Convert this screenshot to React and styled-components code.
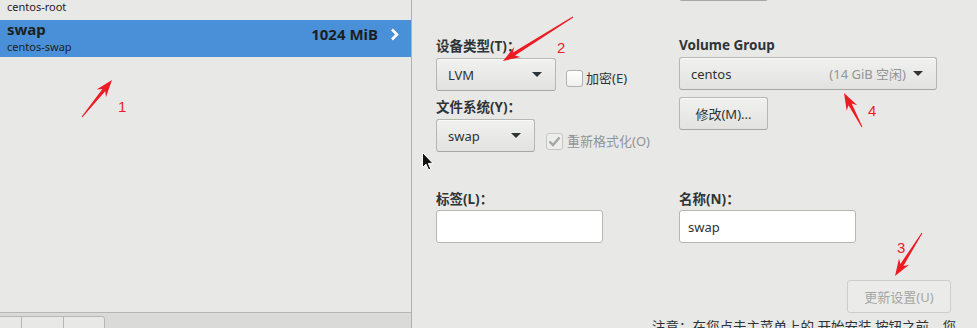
import React from 'react';
import styled, { createGlobalStyle } from 'styled-components';

const GlobalStyle = createGlobalStyle`
  html, body {
    margin: 0;
    padding: 0;
    overflow: hidden;
    background: #e8e8e7;
  }
  body {
    font-family: "Noto Sans", "Noto Sans CJK SC", sans-serif;
    color: #2e3436;
  }
  * {
    box-sizing: border-box;
  }
`;

const Screen = styled.div`
  position: relative;
  display: flex;
  width: 977px;
  height: 328px;
  overflow: hidden;
  background: #e8e8e7;
`;

/* ---------- left: partition list ---------- */

const LeftPane = styled.div`
  flex: none;
  width: 412px;
  display: flex;
  flex-direction: column;
  border-right: 1px solid #b1b1ae;
`;

const ListViewport = styled.div`
  flex: 1;
  overflow: hidden;
`;

const PartitionList = styled.div`
  display: flex;
  flex-direction: column;
  gap: 3px;
  margin-top: -20px;
`;

const PartitionRow = styled.div`
  height: 37px;
  display: flex;
  justify-content: space-between;
  padding: 0 12px 0 7px;
  background: ${(p) => (p.$selected ? '#4a90d9' : 'transparent')};
  color: #1c1f20;
`;

const RowText = styled.div`
  display: flex;
  flex-direction: column;
`;

const RowName = styled.div`
  font-size: 15px;
  font-weight: 700;
  line-height: 18px;
`;

const RowSub = styled.div`
  font-size: 11px;
  line-height: 14px;
  margin-top: 2px;
`;

const RowSize = styled.div`
  display: flex;
  align-items: center;
  gap: 12px;
  height: 18px;
  margin-top: 5px;
  font-size: 15px;
  font-weight: 700;
  line-height: 18px;
`;

const ListToolbar = styled.div`
  flex: none;
  height: 16px;
  display: flex;
  align-items: flex-start;
  padding-top: 3px;
  border-top: 1px solid #b6b6b3;
  background: #dadad9;
`;

const ToolButton = styled.div`
  width: ${(p) => p.$w}px;
  height: 20px;
  border: 1px solid #b6b6b3;
  border-left: ${(p) => (p.$first ? 'none' : '1px solid #b6b6b3')};
  margin-left: ${(p) => (p.$first ? 0 : -1)}px;
  border-radius: ${(p) => (p.$last ? '0 3px 0 0' : '0')};
  background: #e8e8e7;
`;

/* ---------- right: details form ---------- */

const RightPane = styled.div`
  flex: 1;
  min-width: 0;
  display: flex;
  flex-direction: column;
  padding: 0 26px 0 24px;
`;

const FormGrid = styled.div`
  display: grid;
  grid-template-columns: 243px 1fr;
  align-items: start;
`;

const Column = styled.div`
  display: flex;
  flex-direction: column;
  align-items: flex-start;
`;

const FieldLabel = styled.div`
  margin-top: ${(p) => p.$gap || 0}px;
  font-size: 13.5px;
  font-weight: 700;
  line-height: 17px;
  white-space: nowrap;
`;

const ControlRow = styled.div`
  display: flex;
  align-items: flex-start;
  gap: ${(p) => p.$gap}px;
  margin-top: 3px;
`;

const buttonSurface = `
  height: 33px;
  border: 1px solid #b6b6b3;
  border-bottom-color: #a7a7a4;
  border-radius: 3px;
  background: linear-gradient(to bottom, #f1f1f0, #e2e2e0);
  box-shadow: inset 0 1px #fafaf9;
  font-family: "Noto Sans", "Noto Sans CJK SC", sans-serif;
  font-size: 13px;
  color: #2e3436;
`;

const Dropdown = styled.div`
  ${buttonSurface}
  width: ${(p) => p.$w}px;
  margin-top: ${(p) => p.$gap || 0}px;
  display: flex;
  align-items: center;
  padding: 0 13px 0 11px;
`;

const DropValue = styled.span`
  flex: 1;
`;

const DropHint = styled.span`
  margin-right: 7px;
  color: #929595;
`;

const Caret = styled.span`
  width: 0;
  height: 0;
  border-left: 5px solid transparent;
  border-right: 5px solid transparent;
  border-top: 5px solid #2e3436;
`;

const PushButton = styled.button`
  ${buttonSurface}
  flex: none;
  width: ${(p) => p.$w}px;
  margin-top: ${(p) => p.$gap || 0}px;
  padding: 0;
  &:disabled {
    color: #a4a6a6;
    border-color: #cdcdcb;
    background: #ebebea;
    box-shadow: none;
  }
`;

const CheckItem = styled.label`
  display: flex;
  align-items: center;
  gap: ${(p) => (p.$disabled ? 4 : 3)}px;
  margin-top: ${(p) => p.$top}px;
  font-size: 13px;
  line-height: 17px;
  color: ${(p) => (p.$disabled ? '#919494' : '#2e3436')};
  white-space: nowrap;
`;

const CheckBox = styled.span`
  width: 17px;
  height: 17px;
  display: flex;
  align-items: center;
  justify-content: center;
  border: 1px solid ${(p) => (p.$disabled ? '#c6c6c4' : '#b1b1ae')};
  border-radius: 3px;
  background: ${(p) =>
    p.$disabled ? '#ededec' : 'linear-gradient(to bottom, #ffffff, #efefee)'};
`;

const TextInput = styled.input`
  width: ${(p) => p.$w}px;
  height: 33px;
  margin-top: 2px;
  padding: 0 8px;
  border: 1px solid #b6b6b3;
  border-radius: 3px;
  background: #ffffff;
  font-family: "Noto Sans", "Noto Sans CJK SC", sans-serif;
  font-size: 13px;
  color: #2e3436;
  outline: none;
`;

const Footer = styled.div`
  display: flex;
  flex-direction: column;
  align-items: flex-end;
  margin-top: 37px;
`;

const Note = styled.div`
  align-self: flex-start;
  margin: 6px 0 0 216px;
  font-size: 13.5px;
  line-height: 17px;
  white-space: nowrap;
`;

/* ---------- overlays ---------- */

const Overlay = styled.svg`
  position: absolute;
  left: 0;
  top: 0;
  pointer-events: none;
`;

const Cursor = styled.svg`
  position: absolute;
  left: 422px;
  top: 152px;
`;

const arrowPoints = (x1, y1, x2, y2) => {
  const len = Math.hypot(x2 - x1, y2 - y1);
  const dx = (x2 - x1) / len;
  const dy = (y2 - y1) / len;
  const nx = -dy;
  const ny = dx;
  const at = (back, side) => [x2 - dx * back + nx * side, y2 - dy * back + ny * side];
  const pts = [
    [x1 + nx * 0.5, y1 + ny * 0.5],
    at(13, 1.8),
    at(17, 6),
    [x2, y2],
    at(17, -6),
    at(13, -1.8),
    [x1 - nx * 0.5, y1 - ny * 0.5],
  ];
  return pts.map((p) => p.map((v) => v.toFixed(1)).join(',')).join(' ');
};

const marks = [
  { from: [82, 117], to: [112, 80], n: '1', at: [118, 112] },
  { from: [573, 17], to: [503, 61], n: '2', at: [557, 53] },
  { from: [922, 233], to: [895, 276], n: '3', at: [897, 253] },
  { from: [862, 127], to: [844, 93], n: '4', at: [868, 116] },
];

const Chevron = () => (
  <svg width="9" height="13" viewBox="0 0 9 13">
    <path d="M2 1.5 L7 6.5 L2 11.5" fill="none" stroke="#ffffff" strokeWidth="2.6" />
  </svg>
);

const Tick = () => (
  <svg width="13" height="11" viewBox="0 0 13 11">
    <path d="M1.5 5.5 L5 9 L11.5 1.5" fill="none" stroke="#a3a5a5" strokeWidth="2.4" />
  </svg>
);

const App = () => (
  <>
    <GlobalStyle />
    <Screen>
      <LeftPane>
        <ListViewport>
          <PartitionList>
            <PartitionRow>
              <RowText>
                <RowName>root</RowName>
                <RowSub>centos-root</RowSub>
              </RowText>
            </PartitionRow>
            <PartitionRow $selected>
              <RowText>
                <RowName>swap</RowName>
                <RowSub>centos-swap</RowSub>
              </RowText>
              <RowSize>
                1024 MiB
                <Chevron />
              </RowSize>
            </PartitionRow>
          </PartitionList>
        </ListViewport>
        <ListToolbar>
          <ToolButton $w={22} $first />
          <ToolButton $w={43} />
          <ToolButton $w={42} $last />
        </ListToolbar>
      </LeftPane>

      <RightPane>
        <FormGrid>
          <Column>
            <FieldLabel $gap={38}>设备类型(T)：</FieldLabel>
            <ControlRow $gap={10}>
              <Dropdown $w={120}>
                <DropValue>LVM</DropValue>
                <Caret />
              </Dropdown>
              <CheckItem $top={12}>
                <CheckBox />
                加密(E)
              </CheckItem>
            </ControlRow>
            <FieldLabel $gap={8}>文件系统(Y)：</FieldLabel>
            <ControlRow $gap={11}>
              <Dropdown $w={99}>
                <DropValue>swap</DropValue>
                <Caret />
              </Dropdown>
              <CheckItem $top={14} $disabled>
                <CheckBox $disabled>
                  <Tick />
                </CheckBox>
                重新格式化(O)
              </CheckItem>
            </ControlRow>
            <FieldLabel $gap={39}>标签(L)：</FieldLabel>
            <TextInput $w={167} defaultValue="" />
          </Column>

          <Column>
            <PushButton $w={89} $gap={-32} />
            <FieldLabel $gap={36}>Volume Group</FieldLabel>
            <Dropdown $w={258} $gap={3}>
              <DropValue>centos</DropValue>
              <DropHint>(14 GiB 空闲)</DropHint>
              <Caret />
            </Dropdown>
            <PushButton $w={89} $gap={7}>修改(M)...</PushButton>
            <FieldLabel $gap={61}>名称(N)：</FieldLabel>
            <TextInput $w={177} defaultValue="swap" />
          </Column>
        </FormGrid>

        <Footer>
          <PushButton $w={104} disabled>更新设置(U)</PushButton>
          <Note>注意：在您点击主菜单上的 开始安装 按钮之前，您</Note>
        </Footer>
      </RightPane>

      <Overlay width="977" height="328" viewBox="0 0 977 328">
        {marks.map((m) => (
          <g key={m.n}>
            <polygon points={arrowPoints(m.from[0], m.from[1], m.to[0], m.to[1])} fill="#ec1c24" />
            <text
              x={m.at[0]}
              y={m.at[1]}
              fill="#ec1c24"
              fontSize="15"
              fontFamily="'Liberation Sans', sans-serif"
            >
              {m.n}
            </text>
          </g>
        ))}
      </Overlay>

      <Cursor width="12" height="19" viewBox="0 0 12 19">
        <path
          d="M0.5 0.5 L0.5 15.5 L4 12.2 L6.6 18 L8.8 17 L6.3 11.4 L11 11.4 Z"
          fill="#111111"
          stroke="#ffffff"
          strokeWidth="1"
        />
      </Cursor>
    </Screen>
  </>
);

export default App;
